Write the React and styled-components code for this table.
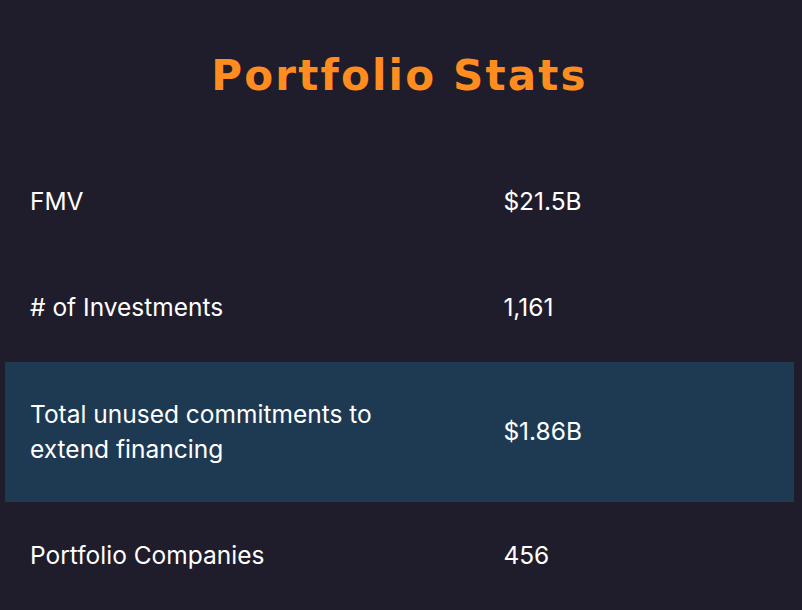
import React from "react";
import styled, { createGlobalStyle } from "styled-components";

const Global = createGlobalStyle`
  html, body { margin: 0; padding: 0; background: #1f1d2b; }
  body { font-family: Inter, "Noto Sans", sans-serif; color: #ffffff; }
`;

const Page = styled.div`
  width: 802px;
  height: 610px;
  box-sizing: border-box;
  padding: 0 8px 0 5px;
  background: #1f1d2b;
  overflow: hidden;
`;

const Title = styled.h1`
  margin: 0;
  padding-top: 46px;
  height: 149px;
  box-sizing: border-box;
  text-align: center;
  font-family: "DejaVu Sans", "Open Sans", sans-serif;
  font-weight: 700;
  font-size: 42px;
  letter-spacing: 2.2px;
  line-height: 60px;
  color: #ff8c1f;
`;

const Table = styled.div`
  display: flex;
  flex-direction: column;
  gap: 2px;
`;

const Row = styled.div`
  display: grid;
  grid-template-columns: 60% 40%;
  align-items: center;
  padding: 34.75px 0;
  background: ${(p) => (p.$highlight ? "#1e3a53" : "transparent")};
  font-size: 24.5px;
  line-height: 35px;
`;

const Label = styled.div`
  padding: 0 60px 0 25px;
`;

const Value = styled.div`
  padding: 0 25px;
`;

const rows = [
  { label: "FMV", value: "$21.5B" },
  { label: "# of Investments", value: "1,161" },
  { label: "Total unused commitments to extend financing", value: "$1.86B", highlight: true },
  { label: "Portfolio Companies", value: "456" },
];

export default function App() {
  return (
    <Page>
      <Global />
      <Title>Portfolio Stats</Title>
      <Table>
        {rows.map((r) => (
          <Row key={r.label} $highlight={r.highlight}>
            <Label>{r.label}</Label>
            <Value>{r.value}</Value>
          </Row>
        ))}
      </Table>
    </Page>
  );
}
